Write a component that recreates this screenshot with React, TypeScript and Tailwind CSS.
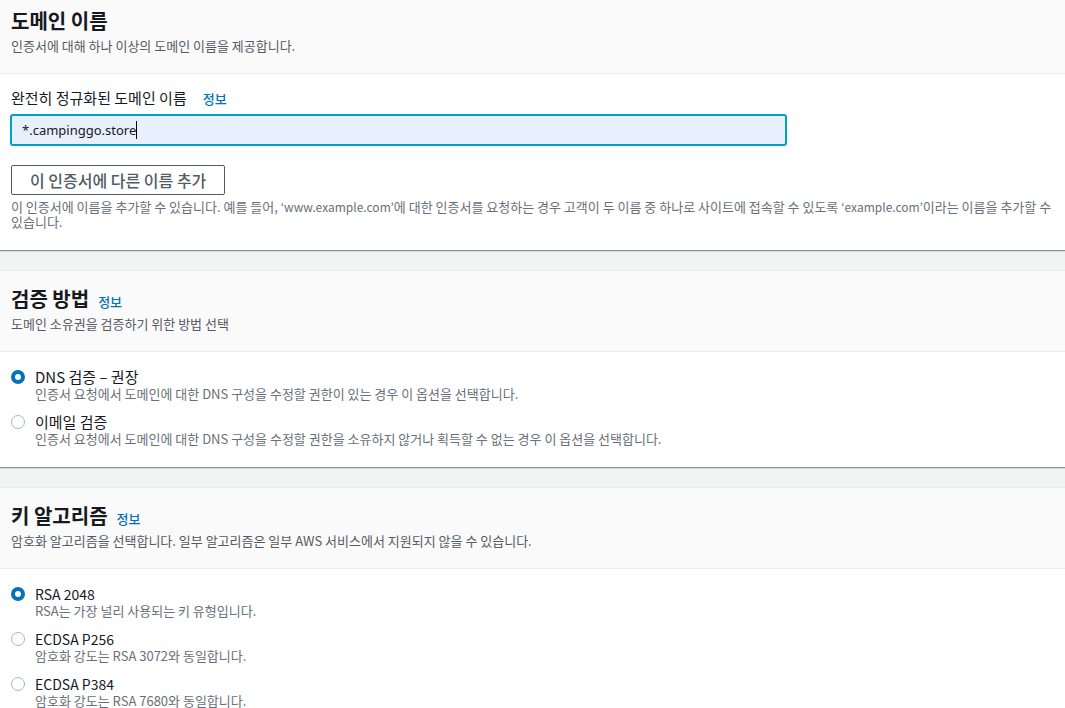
import { useState } from 'react';
import type { ReactNode } from 'react';

type Option = {
  value: string;
  label: string;
  description: string;
};

const validationOptions: Option[] = [
  {
    value: 'dns',
    label: 'DNS 검증 – 권장',
    description: '인증서 요청에서 도메인에 대한 DNS 구성을 수정할 권한이 있는 경우 이 옵션을 선택합니다.',
  },
  {
    value: 'email',
    label: '이메일 검증',
    description: '인증서 요청에서 도메인에 대한 DNS 구성을 수정할 권한을 소유하지 않거나 획득할 수 없는 경우 이 옵션을 선택합니다.',
  },
];

const keyOptions: Option[] = [
  { value: 'rsa2048', label: 'RSA 2048', description: 'RSA는 가장 널리 사용되는 키 유형입니다.' },
  { value: 'p256', label: 'ECDSA P256', description: '암호화 강도는 RSA 3072와 동일합니다.' },
  { value: 'p384', label: 'ECDSA P384', description: '암호화 강도는 RSA 7680와 동일합니다.' },
];

function InfoLink() {
  return (
    <a href="#info" className="text-[13px] leading-4 font-medium text-[#0073bb] hover:underline">
      정보
    </a>
  );
}

type SectionHeaderProps = {
  title: string;
  description: string;
  info?: boolean;
  className: string;
};

function SectionHeader({ title, description, info, className }: SectionHeaderProps) {
  return (
    <div className={`border-b border-[#eaeded] bg-[#fafafa] px-[11px] pb-[18px] ${className}`}>
      <div className="flex items-baseline gap-[9px]">
        <h2 className="text-xl leading-[26px] font-bold text-[#16191f]">{title}</h2>
        {info && <InfoLink />}
      </div>
      <p className="mt-[3px] text-[13px] leading-[18px] text-[#545b64]">{description}</p>
    </div>
  );
}

type RadioGroupProps = {
  name: string;
  options: Option[];
  value: string;
  onChange: (value: string) => void;
  labelClassName: string;
};

function RadioGroup({ name, options, value, onChange, labelClassName }: RadioGroupProps) {
  return (
    <div className="flex flex-col gap-3 px-[11px] pt-4 pb-[21px]">
      {options.map((o) => (
        <label key={o.value} className="flex cursor-pointer gap-[10px]">
          <input
            type="radio"
            name={name}
            value={o.value}
            checked={value === o.value}
            onChange={() => onChange(o.value)}
            className="mt-[2px] size-[14px] shrink-0 appearance-none rounded-full border border-[#aab7b8] bg-white checked:border-4 checked:border-[#0073bb]"
          />
          <span className="flex flex-col">
            <span className={`leading-[18px] text-[#16191f] ${labelClassName}`}>{o.label}</span>
            <span className="text-[13px] leading-[15px] text-[#687078]">{o.description}</span>
          </span>
        </label>
      ))}
    </div>
  );
}

function Section({ children }: { children: ReactNode }) {
  return <section className="border-b border-[#879596] bg-white shadow-[0_1px_0_#d5dbdb]">{children}</section>;
}

export default function App() {
  const [domain, setDomain] = useState('*.campinggo.store');
  const [validation, setValidation] = useState('dns');
  const [algorithm, setAlgorithm] = useState('rsa2048');

  return (
    <main className="flex flex-col gap-[19px] bg-[#f2f3f3] font-['Noto_Sans_CJK_KR',sans-serif]">
      <Section>
        <SectionHeader
          title="도메인 이름"
          description="인증서에 대해 하나 이상의 도메인 이름을 제공합니다."
          className="pt-2"
        />
        <div className="px-[11px] pt-[14px] pb-[21px]">
          <div className="flex items-baseline gap-4">
            <label htmlFor="domain" className="text-[15px] leading-5 text-[#16191f]">
              완전히 정규화된 도메인 이름
            </label>
            <InfoLink />
          </div>
          <div className="relative mt-[7px] max-w-[775px] font-['Noto_Sans','Noto_Sans_CJK_KR',sans-serif] text-[13px]">
            <input
              id="domain"
              type="text"
              autoFocus
              value={domain}
              onChange={(e) => setDomain(e.target.value)}
              className="block h-[30px] w-full rounded-xs border border-[#00a1c9] bg-[#e8f0fe] px-[10px] text-[#16191f] caret-transparent ring-1 ring-[#00a1c9] outline-none"
            />
            {/* caret sits right after the typed text */}
            <div className="pointer-events-none absolute inset-0 flex items-center overflow-hidden px-[11px]" aria-hidden="true">
              <span className="h-[18px] border-r border-black">
                <span className="invisible">{domain}</span>
              </span>
            </div>
          </div>
          <button
            type="button"
            className="mt-5 block h-[30px] rounded-xs border border-[#545b64] bg-white px-[18px] text-base leading-5 font-medium text-[#545b64] hover:bg-[#fafafa]"
          >
            이 인증서에 다른 이름 추가
          </button>
          <p className="mt-1 text-[13px] leading-[15px] text-[#687078]">
            이 인증서에 이름을 추가할 수 있습니다. 예를 들어, <span className="text-xs leading-none">‘www.example.com’</span>에 대한 인증서를 요청하는 경우 고객이 두 이름 중 하나로 사이트에 접속할 수 있도록 <span className="text-xs leading-none">‘example.com’</span>이라는 이름을 추가할 수 있습니다.
          </p>
        </div>
      </Section>

      <Section>
        <SectionHeader
          title="검증 방법"
          description="도메인 소유권을 검증하기 위한 방법 선택"
          info
          className="border-t pt-[15px]"
        />
        <RadioGroup
          name="validation"
          options={validationOptions}
          value={validation}
          onChange={setValidation}
          labelClassName="text-[15px]"
        />
      </Section>

      <Section>
        <SectionHeader
          title="키 알고리즘"
          description="암호화 알고리즘을 선택합니다. 일부 알고리즘은 일부 AWS 서비스에서 지원되지 않을 수 있습니다."
          info
          className="border-t pt-[15px]"
        />
        <RadioGroup
          name="algorithm"
          options={keyOptions}
          value={algorithm}
          onChange={setAlgorithm}
          labelClassName="text-sm"
        />
      </Section>
    </main>
  );
}
